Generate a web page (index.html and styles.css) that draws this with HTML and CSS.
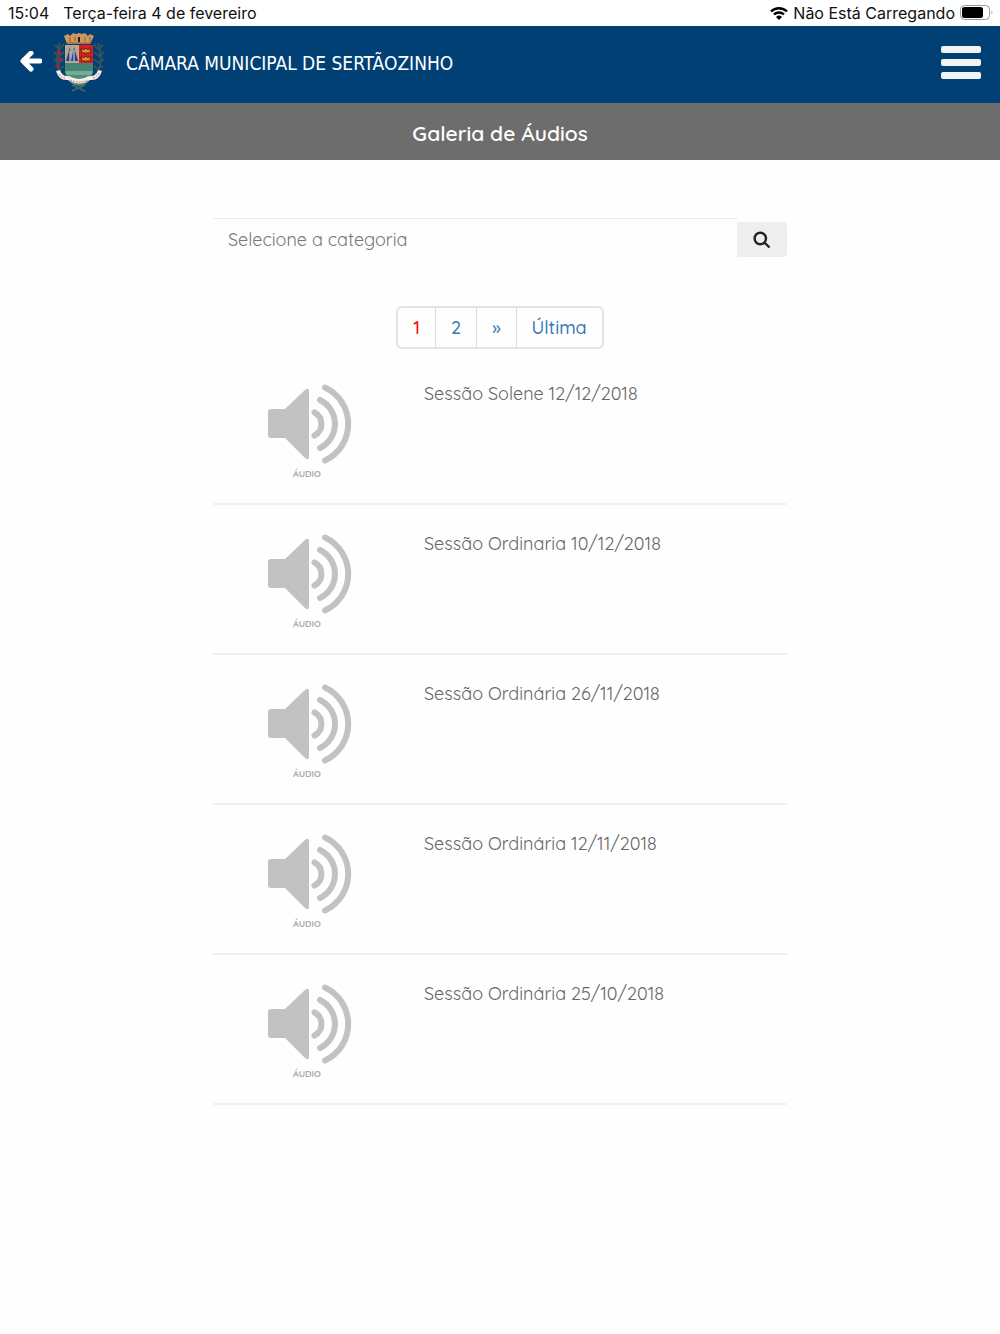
FILE: index.html
```
<!DOCTYPE html>
<html lang="pt-BR">
  <head>
    <meta charset="UTF-8" />
    <meta name="viewport" content="width=device-width, initial-scale=1" />
    <title>Galeria de Áudios</title>
    <link rel="stylesheet" href="styles.css">
  </head>
  <body>
    <!-- shared shapes -->
    <svg class="sprite" aria-hidden="true">
      <symbol id="audio" viewBox="0 0 84 80">
        <path d="M3 25h14L37 6q4-3 4 1v66q0 4-4 1L17 54H3q-3 0-3-3V28q0-3 3-3z" fill="#c2c2c2" />
        <path d="M46.500 28.500a13 13 0 0 1 0 23M52 16a26.700 26.700 0 0 1 0 48M57 3.500a40.300 40.300 0 0 1 0 73" fill="none" stroke="#c2c2c2" stroke-width="6" stroke-linecap="round" />
      </symbol>
    </svg>

    <div class="status">
      <span>15:04</span>
      <span>Terça-feira 4 de fevereiro</span>
      <span class="status-right">
        <svg width="18" height="14" viewBox="0 0 18 14">
          <path d="M1 5.500a11.500 11.500 0 0 1 16 0M4 8.500a7.300 7.300 0 0 1 10 0" fill="none" stroke="#000" stroke-width="2.400" />
          <path d="M9 14l-3-3a4.300 4.300 0 0 1 6 0z" />
        </svg>
        Não Está Carregando
        <svg width="34" height="16" viewBox="0 0 34 16">
          <rect x="0.500" y="0.500" width="29" height="14" rx="4" fill="#fff" stroke="#999" />
          <rect x="2" y="2" width="21" height="11" rx="2.500" />
          <path d="M31.500 5.500q2 2 0 4z" fill="#999" />
        </svg>
      </span>
    </div>

    <header class="header">
      <a class="back" href="#" aria-label="Voltar">
        <svg width="22" height="24" viewBox="0 0 22 24">
          <path d="M11 2L3 10l8 8M4 10h16" fill="none" stroke="#fff" stroke-width="5" stroke-linecap="round" stroke-linejoin="round" />
        </svg>
      </a>
      <svg class="crest" width="50" height="60" viewBox="0 0 50 60">
        <g fill="none" stroke="#35545a" stroke-width="2">
          <path d="M9 46Q-1 28 6 10M41 46Q51 28 44 10" />
          <path d="M1 12l5 4 4-5M0 19l5 4 5-4M0 26l5 4 5-4M1 33l5 3 4-3M3 39l6 2" />
          <path d="M49 12l-5 4-4-5M50 19l-5 4-5-4M50 26l-5 4-5-4M49 33l-5 3-4-3M47 39l-6 2" />
        </g>
        <path d="M18 58l13-6M31 58l-13-6" fill="none" stroke="#4c6a5c" stroke-width="1.500" />
        <path d="M5 17v4M6 24v4M4 31v3" stroke="#b51f2e" stroke-width="3" />
        <path d="M10 3l4-2 2 2 3-3 3 1 3-1 3 1 3-1 3 3 2-2 4 2-4 8H13z" fill="#cf9860" />
        <path d="M13 10h24M16 4v5M21 4v4M31 4v4M36 4v4" stroke="#8a5a33" stroke-width="1" />
        <path d="M24 4h2v5h-2z" fill="#222" />
        <path d="M11 12h28v23q0 16-14 18-14-2-14-18z" fill="#4f8b79" />
        <path d="M11 12h14v18H11z" fill="#b7a78d" />
        <path d="M25 12h14v18H25z" fill="#e3171d" />
        <path d="M16 14l-4 14h5zM20 14l-3 14h7z" fill="#283b8c" />
        <path d="M16 18v10M20 17v11" stroke="#dfe6f2" />
        <path d="M27 15l3 2 2-2 2 2 3-2-1 5h-8zM27 23l3 2 2-2 2 2 3-2-1 5h-8z" fill="#d69332" stroke="#5c2b10" stroke-width="1" />
        <path d="M11 30h28v8H11z" fill="#438472" />
        <path d="M11 39h28M12 41h26" stroke="#9cc7b8" />
        <path d="M2 38q3 10 12 9 11 7 22 0 9 1 12-9l-4-1q-2 7-9 6-10 6-20 0-7 1-9-6z" fill="#f5efec" />
        <path d="M5 41q3 4 6 4M16 47q9 4 18 0M39 45q4-1 6-5" fill="none" stroke="#d17777" stroke-dasharray="2 1" />
      </svg>
      <span class="name">CÂMARA MUNICIPAL DE SERTÃOZINHO</span>
      <button class="menu" aria-label="Menu"><i></i><i></i><i></i></button>
    </header>

    <h1>Galeria de Áudios</h1>

    <main>
      <form class="search">
        <select aria-label="Categoria">
          <option>Selecione a categoria</option>
        </select>
        <button type="button" aria-label="Buscar">
          <svg width="18" height="18" viewBox="0 0 18 18">
            <path d="M11.500 11.500l5 5M13 7.500a5.700 5.700 0 1 1-11.400 0a5.700 5.700 0 1 1 11.400 0z" fill="none" stroke="#222" stroke-width="2.400" />
          </svg>
        </button>
      </form>

      <nav class="pages">
        <a class="active" href="#">1</a>
        <a href="#">2</a>
        <a href="#">»</a>
        <a href="#">Última</a>
      </nav>

      <ul class="list">
        <li>
          <div class="thumb"><svg width="84" height="80"><use href="#audio" /></svg><small>ÁUDIO</small></div>
          <a href="#">Sessão Solene 12/12/2018</a>
        </li>
        <li>
          <div class="thumb"><svg width="84" height="80"><use href="#audio" /></svg><small>ÁUDIO</small></div>
          <a href="#">Sessão Ordinaria 10/12/2018</a>
        </li>
        <li>
          <div class="thumb"><svg width="84" height="80"><use href="#audio" /></svg><small>ÁUDIO</small></div>
          <a href="#">Sessão Ordinária 26/11/2018</a>
        </li>
        <li>
          <div class="thumb"><svg width="84" height="80"><use href="#audio" /></svg><small>ÁUDIO</small></div>
          <a href="#">Sessão Ordinária 12/11/2018</a>
        </li>
        <li>
          <div class="thumb"><svg width="84" height="80"><use href="#audio" /></svg><small>ÁUDIO</small></div>
          <a href="#">Sessão Ordinária 25/10/2018</a>
        </li>
      </ul>
    </main>
  </body>
</html>
```
FILE: styles.css
```
* {
  box-sizing: border-box;
}

body {
  margin: 0;
  background-color: #fefefe;
  color: #666;
  font-family: Quicksand, Lato, sans-serif;
  font-size: 18px;
}

a {
  color: inherit;
  text-decoration: none;
}

button {
  border: 0;
  padding: 0;
  cursor: pointer;
}

.sprite {
  display: none;
}

.status {
  display: flex;
  align-items: center;
  gap: 14px;
  height: 26px;
  padding: 0 0 0 8px;
  background-color: white;
  color: #111;
  font-family: Inter, sans-serif;
  font-size: 16px;
}

.status-right {
  display: flex;
  align-items: center;
  gap: 5px;
  margin-left: auto;
  padding-right: 6px;
}

.header {
  display: flex;
  align-items: center;
  height: 77px;
  padding: 0 19px 4px 20px;
  background-color: #004074;
  color: white;
}

.back {
  display: flex;
  margin-right: 12px;
}

.name {
  margin-left: 22px;
  font-family: "DejaVu Sans Condensed", "Noto Sans", sans-serif;
  font-size: 19px;
}

.menu {
  display: flex;
  flex-direction: column;
  gap: 6px;
  margin-left: auto;
  background: none;
}

.menu i {
  width: 40px;
  height: 7px;
  border-radius: 2px;
  background-color: #f3f3f3;
}

h1 {
  margin: 0;
  height: 57px;
  line-height: 60px;
  background-color: #6d6d6d;
  color: white;
  text-align: center;
  font-size: 21px;
  font-weight: 600;
}

main {
  max-width: 574px;
  margin: 0 auto;
  padding-top: 58px;
}

.search {
  display: flex;
  align-items: flex-end;
}

.search select {
  flex: 1;
  height: 39px;
  padding: 2px 15px 0;
  border: 0;
  border-top: 1px solid #ebebeb;
  appearance: none;
  background: none;
  color: #777;
  font: inherit;
}

.search button {
  display: flex;
  align-items: center;
  justify-content: center;
  width: 50px;
  height: 35px;
  border-radius: 0 4px 4px 0;
  background-color: #eee;
}

.pages {
  display: flex;
  width: fit-content;
  height: 43px;
  margin: 49px auto 6px;
  border: 2px solid #e3e3e3;
  border-radius: 6px;
  color: #337ab7;
  font-weight: 500;
  line-height: 40px;
}

.pages a {
  padding: 0 15px;
}

.pages a + a {
  border-left: 1px solid #ddd;
}

.pages .active {
  color: red;
}

.list {
  margin: 0;
  padding: 0;
  list-style: none;
}

.list li {
  display: flex;
  align-items: flex-start;
  height: 150px;
  padding-top: 29px;
  border-bottom: 2px solid #f1f1f1;
}

.list a {
  line-height: 20px;
}

.thumb {
  display: flex;
  flex-direction: column;
  width: 84px;
  margin-left: 55px;
  margin-right: 72px;
}

.thumb small {
  margin-left: 25px;
  color: #aaa;
  font-size: 9px;
  font-weight: bold;
  line-height: 20px;
}
```
